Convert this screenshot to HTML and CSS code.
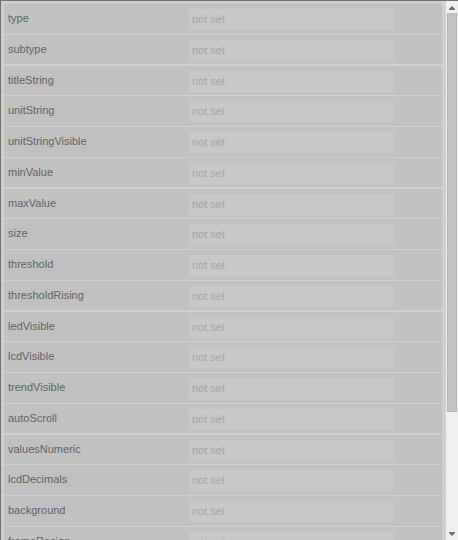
FILE: index.html
```html
<!DOCTYPE html>
<html>
<head>
<meta charset="utf-8">
<link rel="stylesheet" href="styles.css">
</head>
<body>
<div class="panel">
  <div class="list">
    <div class="row"><span class="label">type</span><span class="field">not set</span></div>
    <div class="row"><span class="label">subtype</span><span class="field">not set</span></div>
    <div class="row"><span class="label">titleString</span><span class="field">not set</span></div>
    <div class="row"><span class="label">unitString</span><span class="field">not set</span></div>
    <div class="row"><span class="label">unitStringVisible</span><span class="field">not set</span></div>
    <div class="row"><span class="label">minValue</span><span class="field">not set</span></div>
    <div class="row"><span class="label">maxValue</span><span class="field">not set</span></div>
    <div class="row"><span class="label">size</span><span class="field">not set</span></div>
    <div class="row"><span class="label">threshold</span><span class="field">not set</span></div>
    <div class="row"><span class="label">thresholdRising</span><span class="field">not set</span></div>
    <div class="row"><span class="label">ledVisible</span><span class="field">not set</span></div>
    <div class="row"><span class="label">lcdVisible</span><span class="field">not set</span></div>
    <div class="row"><span class="label">trendVisible</span><span class="field">not set</span></div>
    <div class="row"><span class="label">autoScroll</span><span class="field">not set</span></div>
    <div class="row"><span class="label">valuesNumeric</span><span class="field">not set</span></div>
    <div class="row"><span class="label">lcdDecimals</span><span class="field">not set</span></div>
    <div class="row"><span class="label">background</span><span class="field">not set</span></div>
    <div class="row"><span class="label">frameDesign</span><span class="field">not set</span></div>
    <div class="row"><span class="label">foregroundType</span><span class="field">not set</span></div>
  </div>
  <div class="scrollbar">
    <svg class="arrow" width="12" height="11" viewBox="0 0 12 11"><path d="M3 8 L6 5 L9 8 Z" fill="#6a6a6a"/><rect x="3" y="8" width="6" height="1" fill="#6a6a6a"/></svg>
    <div class="track"><div class="thumb"></div></div>
    <svg class="arrow" width="12" height="11" viewBox="0 0 12 11"><rect x="3" y="3" width="6" height="1" fill="#6a6a6a"/><path d="M3 4 L9 4 L6 7 Z" fill="#6a6a6a"/></svg>
  </div>
</div>
</body>
</html>
```
FILE: styles.css
```css
html, body {
  margin: 0;
  padding: 0;
  background: #cfcfcf;
}
.panel {
  width: 458px;
  height: 540px;
  box-sizing: border-box;
  border-top: 1px solid #707070;
  border-left: 1px solid #707070;
  background: #cfcfcf;
  display: flex;
  overflow: hidden;
}
.list {
  flex: 1;
  padding: 3px 4px 0 3px;
  display: flex;
  flex-direction: column;
  gap: 1.25px;
  overflow: hidden;
}
.row {
  flex: none;
  height: 29.5px;
  background: #c1c1c1;
  display: grid;
  grid-template-columns: 185px 205px;
  align-items: start;
  font-family: "Liberation Sans", Arial, sans-serif;
  font-size: 11px;
}
.label {
  padding-left: 4px;
  line-height: 29px;
  color: #636363;
}
.field {
  margin-top: 5px;
  height: 21px;
  line-height: 20px;
  padding-left: 3px;
  background: #c7c7c7;
  color: #a6a6a6;
}
.scrollbar {
  width: 12px;
  flex: none;
  background: #efefef;
  display: flex;
  flex-direction: column;
}
.arrow {
  display: block;
  flex: none;
}
.track {
  flex: 1;
  padding: 1px 1px 0 1px;
}
.thumb {
  height: 399px;
  background: #c2c2c2;
  border: 1px solid #b5b5b5;
  box-sizing: border-box;
}
```
